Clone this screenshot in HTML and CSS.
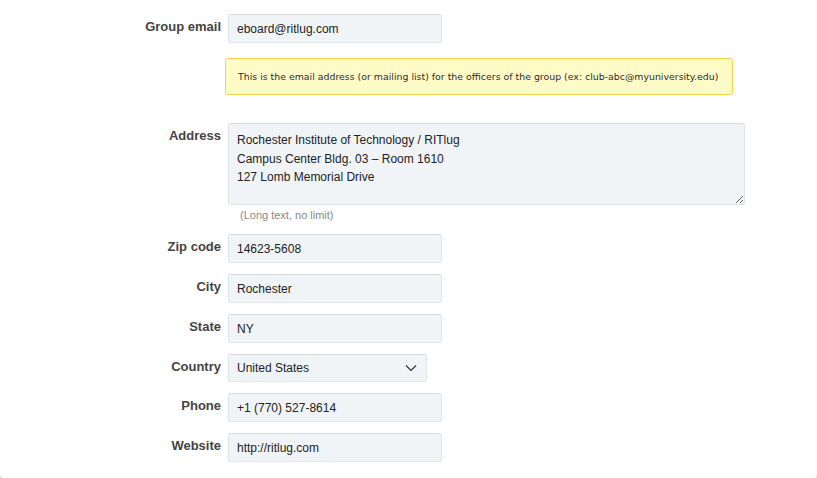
FILE: index.html
```html
<!DOCTYPE html>
<html>
<head>
<meta charset="utf-8">
<link rel="stylesheet" href="styles.css">
</head>
<body>
<div class="card">
  <div class="row">
    <label class="label">Group email</label>
    <div class="field">
      <input class="input" type="text" value="eboard@ritlug.com">
      <div class="hint">This is the email address (or mailing list) for the officers of the group (ex: club-abc@myuniversity.edu)</div>
    </div>
  </div>
  <div class="row row-address">
    <label class="label">Address</label>
    <div class="field">
      <textarea class="textarea">Rochester Institute of Technology / RITlug
Campus Center Bldg. 03 – Room 1610
127 Lomb Memorial Drive</textarea>
      <div class="help">(Long text, no limit)</div>
    </div>
  </div>
  <div class="row">
    <label class="label">Zip code</label>
    <div class="field"><input class="input" type="text" value="14623-5608"></div>
  </div>
  <div class="row">
    <label class="label">City</label>
    <div class="field"><input class="input" type="text" value="Rochester"></div>
  </div>
  <div class="row">
    <label class="label">State</label>
    <div class="field"><input class="input" type="text" value="NY"></div>
  </div>
  <div class="row">
    <label class="label">Country</label>
    <div class="field">
      <div class="select-wrap">
        <select class="select"><option>United States</option></select>
        <svg class="chevron" width="12" height="8" viewBox="0 0 12 8"><path d="M1 1.5 L6 6.5 L11 1.5" fill="none" stroke="#333" stroke-width="1.2"/></svg>
      </div>
    </div>
  </div>
  <div class="row">
    <label class="label">Phone</label>
    <div class="field"><input class="input" type="text" value="+1 (770) 527-8614"></div>
  </div>
  <div class="row">
    <label class="label">Website</label>
    <div class="field"><input class="input" type="text" value="http://ritlug.com"></div>
  </div>
</div>
</body>
</html>
```

FILE: styles.css
```css
html, body {
  margin: 0;
  padding: 0;
  background: #d9d9d9;
}
body {
  font-family: "Liberation Sans", Arial, sans-serif;
  height: 478px;
  overflow: hidden;
}
.card {
  background: #ffffff;
  border-radius: 0 0 4px 4px;
  padding: 14px 0 15px;
  height: 449px;
}
.row {
  display: flex;
  gap: 7px;
  margin-bottom: 11px;
}
.row:last-child {
  margin-bottom: 0;
}
.label {
  width: 221px;
  flex: none;
  text-align: right;
  font-weight: bold;
  font-size: 13px;
  line-height: 16px;
  color: #444;
  padding-top: 5px;
}
.field {
  display: flex;
  flex-direction: column;
  align-items: flex-start;
}
.input, .textarea, .select {
  box-sizing: border-box;
  font-family: "Liberation Sans", Arial, sans-serif;
  font-size: 12px;
  color: #222;
  background: #f0f4f7;
  border: 1px solid #e0e5ea;
  border-top-color: #d3dae1;
  border-radius: 3px;
  margin: 0;
  outline: none;
}
.input {
  width: 214px;
  height: 29px;
  padding: 0 8px;
}
.hint {
  box-sizing: border-box;
  margin: 15px 0 0 -3px;
  width: 508px;
  height: 37px;
  padding: 0 0 0 12px;
  display: flex;
  align-items: center;
  white-space: nowrap;
  overflow: hidden;
  background: #fffbc7;
  border: 1px solid #f6d54a;
  border-radius: 3px;
  font-family: "DejaVu Sans", Verdana, sans-serif;
  font-size: 9.4px;
  color: #2e2e2e;
}
.row-address {
  margin-top: 28px;
  margin-bottom: 12px;
}
.textarea {
  width: 517px;
  height: 82px;
  padding: 7px 8px;
  line-height: 18.5px;
  resize: vertical;
  display: block;
}
.help {
  margin-top: 3px;
  padding-left: 12px;
  font-size: 11px;
  line-height: 14px;
  color: #888;
}
.select-wrap {
  position: relative;
}
.select {
  width: 199px;
  height: 28px;
  padding: 0 8px;
  -webkit-appearance: none;
  appearance: none;
  display: block;
}
.chevron {
  position: absolute;
  right: 10px;
  top: 10px;
  pointer-events: none;
}
```
